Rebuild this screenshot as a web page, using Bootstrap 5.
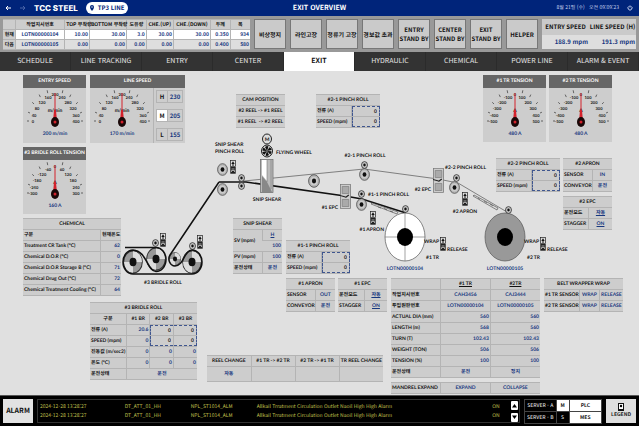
<!DOCTYPE html>
<html lang="ko">
<head>
<meta charset="utf-8">
<meta name="viewport" content="width=device-width, initial-scale=1">
<title>TCC STEEL – EXIT OVERVIEW</title>
<link rel="stylesheet" href="https://cdn.jsdelivr.net/npm/bootstrap@5.3.0/dist/css/bootstrap.min.css">
<style>
:root{--navy:#00247a;--ink:#111;--val:#17377f;--panel:#cdcdcd;--rule:#b4b4b4;--tight:Lato,"Noto Sans CJK KR",sans-serif}
body{font-family:"Noto Sans CJK KR","Noto Sans",sans-serif;font-size:5px;line-height:8px;color:var(--ink);background:#e0e0e0;min-height:100vh;text-rendering:geometricPrecision}
button,input{font:inherit;color:inherit;text-rendering:inherit}
button{padding:0}
.topbar{background:var(--navy);color:#fff;height:16px;font-size:7px}
.brand{font:800 8px/16px Inter,sans-serif}
.side{flex:1 1 0}
.line-pill{background:#fff;color:var(--navy);border-radius:6px;font-size:6px;font-weight:700;line-height:12px;padding:0 4px}
.clock{font-size:5px;color:#c9d3ee}
.strip{background:#999;height:36px;padding:3px;gap:4px}
.tb{width:100%;border-collapse:collapse;table-layout:fixed;background:var(--panel);font-family:var(--tight);font-weight:700}
.tb th,.tb td{border:1px solid var(--rule);border-left-width:0;border-right-width:0;height:11px;padding:0 1px;font-weight:700;white-space:nowrap}
.tb th+td,.tb td+td,.tb th+th,.tb td+th{border-left-width:1px}
.tb .v{color:var(--val)}
.orders{flex:247 1 0;font-family:"Noto Sans CJK KR",sans-serif}
.orders .tb{font-family:inherit}
.orders .tb th,.orders .tb td{height:10px;line-height:8px}
.orders tbody tr:first-child td{background:#fff}
.orders tbody tr:last-child td{background:#dedede}
.calls{flex:284 1 0;gap:4px}
.call{flex:1 1 0;background:#cacaca;border:1px solid #777;font-weight:700;font-size:6px;line-height:9px;color:#111;white-space:nowrap}
.speeds{flex:94 1 0;background:#cacaca}
.speeds div{font-size:6px;font-weight:700;line-height:16px;white-space:nowrap}
.speeds .v{background:#dedede;color:var(--val);line-height:14px;padding-right:1px}
.mainnav{background:#333}
.mainnav a{flex:1 1 0;color:#e6e6e6;text-decoration:none;text-align:center;font-size:7px;line-height:19px;white-space:nowrap;border-right:1px solid #2b2b2b}
.mainnav a.active{background:#fff;color:#111;font-weight:700}
.mimic{display:grid;flex:1 0 auto}
.mimic>*{grid-area:1/1}
.scene{width:100%;height:324px}
.scene text,.dial text{font-family:var(--tight);font-weight:700;fill:var(--ink)}
.scene text{font-size:5px}
.scene text.v,.dial text.v{fill:var(--val)}
.dial text{font-size:4px;text-anchor:middle}
.dial text.v,.dial text.unit{font-size:5px}
.zone-l{width:207px;padding:4px 0 0 23px}
.zone-m{width:184px}
.zone-r{width:248px}
.gauge{width:63px;background:var(--panel)}
.gauge h2{background:#666;color:#fff;font:700 5px/13px var(--tight);text-align:center;margin:0;white-space:nowrap}
.dial{display:block;width:63px;height:54px}
.wide{width:95px}
.hml{gap:6px;padding:2px 2px;border-left:1px solid var(--rule)}
.hml div{border:1px solid var(--rule);font-size:6px;font-weight:700;line-height:11px;text-align:center}
.hml span{flex:0 0 10px}
.hml output{flex:1;color:var(--val);border-left:1px solid var(--rule)}
.w49{width:49px}.w64{width:64px}.w79{width:79px}.w98{width:98px}.w107{width:107px}.w149{width:149px}.w176{width:176px}
.gap3{gap:3px}.gap4{gap:4px}.gap31{gap:31px}
.at-cam{padding:23px 0 0 29px}
.at-shear{padding:90px 0 0 26px}
.at-pinch{padding-top:22px}
.at-reel{padding-top:43px}
.at-roll{padding:6px 0 0 67px}
.at-tens{padding:4px 0 0 92px}
.at-apron{padding:16px 0 0 105px}
.at-tr{padding-top:48px}
.tb .box{padding:0}
.tb input{display:block;width:100%;height:10px;border:1px dashed #3f568f;border-bottom:0;background:transparent;text-align:right;padding:0 2px;border-radius:0;font-weight:700}
.tb tr:has(.box)+tr input{border-top:0;border-bottom:1px dashed #3f568f}
.tb .box:nth-last-child(2) input{border-right:0}
.tb .box+.box input{border-left:0}
.tb a{color:var(--val)}
.tb .tall td{height:15px}
.alarmbar{background:#000;border-top:1px solid #555;height:31px;padding:3px;gap:4px}
.alarm{width:30px;background:#e2e2e2;border:0;font-size:7px;font-weight:700;color:#111}
.log{flex:1 1 0;border:1px solid #333;padding:1px 1px 1px 2px;color:#c3c24e}
.log table{width:100%;table-layout:fixed}
.log td{padding:0;line-height:9px;white-space:nowrap}
.arrow{width:7px;height:9px;background:#fff;border:0;border-radius:1px;display:block}
.arrow svg{display:block;margin:auto;width:5px;height:5px}
.servers{width:78px;color:#ddd;border-collapse:collapse;text-align:center}
.servers th,.servers td{border:1px solid #444;padding:0;height:12px;font-weight:500;line-height:9px}
.servers .on{background:#fff;color:#111;font-weight:700}
.legend-btn{width:30px;background:#dedede;border:0;font-weight:700;color:#222}
</style>
<script src="https://cdn.jsdelivr.net/npm/bootstrap@5.3.0/dist/js/bootstrap.bundle.min.js"></script>
</head>
<body class="d-flex flex-column">
<header>
  <div class="topbar d-flex align-items-center px-1">
    <div class="side d-flex align-items-center">
      <svg width="26" height="8" viewBox="0 0 26 8" fill="none" stroke="#fff" aria-hidden="true"><path d="M7 4H2M4 2 2 4l2 2"/><path d="M16 4h5M19 2l2 2-2 2" stroke="#4a64a8"/></svg>
      <span class="brand ms-1 me-2">TCC STEEL</span>
      <span class="line-pill d-flex align-items-center"><svg class="me-1" width="4" height="6" viewBox="0 0 4 6" aria-hidden="true"><path d="M2 0a2 2 0 0 1 2 2Q4 4 2 6 0 4 0 2a2 2 0 0 1 2-2z" fill="#00247a"/><circle cx="2" cy="2" r=".7" fill="#fff"/></svg>TP3 LINE</span>
    </div>
    <strong>EXIT OVERVIEW</strong>
    <div class="side d-flex align-items-center justify-content-end clock"><span class="me-2">8월 21일 (수) &nbsp; 오전 09:09:23</span>
      <svg width="8" height="6" viewBox="0 0 8 6" fill="none" stroke="#c9d3ee" aria-hidden="true"><path d="M2 1.300a2 2 0 1 0 2 0M3 .5v2"/></svg></div>
  </div>
  <div class="strip d-flex">
    <div class="orders"><table class="tb text-end">
      <colgroup><col style="width:5%"><col style="width:20%"><col style="width:10%"><col style="width:15%"><col style="width:8%"><col style="width:11%"><col style="width:15%"><col style="width:8%"><col></colgroup>
      <thead class="text-center"><tr><th></th><th>작업지시번호</th><th>TOP 부착량</th><th>BOTTOM 부착량</th><th>도유량</th><th>CHE.(UP)</th><th>CHE.(DOWN)</th><th>두께</th><th>폭</th></tr></thead>
      <tbody><tr><th>현재</th><td class="v text-center">LOTN00000104</td><td class="v">10.00</td><td class="v">30.00</td><td class="v">3.0</td><td class="v">30.00</td><td class="v">30.00</td><td class="v">0.350</td><td class="v">934</td></tr>
      <tr><th>다음</th><td class="v text-center">LOTN00000105</td><td class="v">0.00</td><td class="v">0.00</td><td class="v">0.00</td><td class="v">0.00</td><td class="v">0.00</td><td class="v">0.400</td><td class="v">580</td></tr></tbody>
    </table></div>
    <div class="calls d-flex">
      <button class="call">비상정지</button><button class="call">라인고장</button><button class="call">정류기 고장</button><button class="call">경보값 초과</button><button class="call">ENTRY<br>STAND BY</button><button class="call">CENTER<br>STAND BY</button><button class="call">EXIT<br>STAND BY</button><button class="call">HELPER</button>
    </div>
    <div class="speeds row g-0 text-center">
      <div class="col-6">ENTRY SPEED</div><div class="col-6">LINE SPEED (H)</div>
      <div class="col-6 v text-end">188.9 mpm</div><div class="col-6 v text-end">191.3 mpm</div>
    </div>
  </div>
  <nav class="mainnav d-flex">
    <a href="#">SCHEDULE</a><a href="#">LINE TRACKING</a><a href="#">ENTRY</a><a href="#">CENTER</a><a href="#" class="active" aria-current="page">EXIT</a><a href="#">HYDRAULIC</a><a href="#">CHEMICAL</a><a href="#">POWER LINE</a><a href="#">ALARM &amp; EVENT</a>
  </nav>
</header>

<main class="mimic">
  <svg class="scene" viewBox="0 71 639 324" preserveAspectRatio="xMidYMin meet">
    <defs>
      <symbol id="roll" viewBox="0 0 20 20" preserveAspectRatio="none"><circle cx="10" cy="10" r="9.300" fill="#999" stroke="#333"/><path d="M10 10V1A9 9 0 0 1 19 10zM10 10V19A9 9 0 0 1 1 10z" fill="#ddd"/><circle cx="10" cy="10" r="3.500" fill="#111"/></symbol>
      <symbol id="disc" viewBox="0 0 20 20" preserveAspectRatio="none"><circle cx="10" cy="10" r="9" fill="#b5b5b5" stroke="#444" stroke-width="1.200"/><circle cx="10" cy="10" r="6" fill="#ccc"/><circle cx="10" cy="10" r="3.500" fill="#111"/></symbol>
      <symbol id="mini" viewBox="0 0 20 20" preserveAspectRatio="none"><circle cx="10" cy="10" r="8.500" fill="#ccc" stroke="#222" stroke-width="2"/><circle cx="10" cy="10" r="3.500" fill="#111"/></symbol>
      <symbol id="clamp" viewBox="0 0 6 14"><rect x=".5" y=".5" width="5" height="6" fill="#ddd" stroke="#222" stroke-width=".7"/><path d="M3 1.200 4.700 4H1.300zM2.500 4h1v2h-1z" fill="#111"/><rect x=".3" y="7" width="5.400" height="6.700" fill="#222"/><path d="M1.500 9h3M1.500 12V10.500h3V12" stroke="#ddd" stroke-width=".7" fill="none"/></symbol>
      <symbol id="epc" viewBox="0 0 10 25" preserveAspectRatio="none"><rect x=".4" y=".4" width="9.200" height="24.200" fill="#ccc" stroke="#777" stroke-width=".7"/><path d="M2 2.500h6v7H2zM2 15.500h6v7H2z" fill="#aaa" stroke="#777" stroke-width=".6"/><path d="M0 11.500l5 1.500M8 11l-3 2.500" stroke="#222"/></symbol>
    </defs>
    <path d="M244 181 364 169 438 179 458 183 507 212" fill="none" stroke="#555" stroke-width=".7"/>
    <use href="#roll" x="123" y="250" width="20" height="24"/>
    <use href="#roll" x="146" y="247" width="20" height="24"/>
    <use href="#roll" x="169" y="252" width="12" height="14"/>
    <use href="#roll" x="182" y="250" width="20" height="24"/>
    <use href="#mini" x="152" y="239" width="7" height="8"/>
    <use href="#mini" x="189" y="242" width="7" height="8"/>
    <path d="M125 247.500H156A10 12 0 0 1 156 271.500C147 271 147 251 133 250A10 12 0 0 0 133 274H192A10 12 0 0 0 192 250C184 250 184 266 175 266A6 7 0 0 1 170 255L219 182" fill="none" stroke="#111" stroke-width="1.500"/>
    <use href="#clamp" x="160" y="233" width="6" height="14"/><use href="#clamp" x="197" y="235" width="6" height="14"/>
    <text x="163" y="284" text-anchor="middle">#3 BRIDLE ROLL</text>
    <text x="215" y="146">SNIP SHEAR</text><text x="215" y="153">PINCH ROLL</text>
    <use href="#disc" x="217" y="163" width="11" height="13"/><use href="#disc" x="217" y="183" width="11" height="13"/>
    <use href="#clamp" x="230" y="160" width="6" height="14"/>
    <path d="M219 182H246L345 196 362 199 406 213" fill="none" stroke="#111" stroke-width="1.500"/>
    <use href="#mini" x="238" y="174" width="7" height="8"/><use href="#mini" x="238" y="182" width="7" height="8"/>
    <ellipse cx="267" cy="139" rx="4.500" ry="5" fill="#ddd" stroke="#222"/><text x="267" y="141" text-anchor="middle">M</text>
    <ellipse cx="267" cy="151" rx="5.500" ry="6" fill="#ddd" stroke="#222"/>
    <g fill="#111"><path id="blade" d="M267 151l-2-4q2-1.500 3.500-.5z"/><use href="#blade" transform="rotate(60 267 151)"/><use href="#blade" transform="rotate(120 267 151)"/><use href="#blade" transform="rotate(180 267 151)"/><use href="#blade" transform="rotate(240 267 151)"/><use href="#blade" transform="rotate(300 267 151)"/></g>
    <text x="276" y="154">FLYING WHEEL</text>
    <rect x="260.500" y="159.500" width="12.500" height="33" fill="#bbb" stroke="#666" stroke-width=".7"/>
    <path d="M262 160h5v21l-5-6z" fill="#fff"/><path d="M262 176l5 6 5 10h-10z" fill="#888"/><path d="M267 160v22M271 160v29" stroke="#777" stroke-width=".6"/>
    <text x="267" y="201" text-anchor="middle">SNIP SHEAR</text>
    <use href="#disc" x="308" y="174" width="12" height="14"/>
    <text x="365" y="157" text-anchor="middle">#2-1 PINCH ROLL</text>
    <use href="#mini" x="361" y="161" width="7" height="8"/><use href="#disc" x="359" y="168" width="11" height="13"/>
    <use href="#epc" x="340" y="184" width="11" height="25"/><text x="338" y="209" text-anchor="end">#1 EPC</text>
    <use href="#mini" x="358" y="190" width="7" height="8"/><use href="#disc" x="356" y="198" width="11" height="13"/>
    <text x="368" y="196">#1-1 PINCH ROLL</text>
    <g fill="#ddd" stroke="#444" stroke-width=".6"><path d="M371 204l1-1 26 9-1 2zM378 207l3 1M384 208l3 2M390 211l3 1M473 196l1-1 24 13-1 2zM478 198l2 1.500M484 201l3 2M490 204l3 2"/></g>
    <use href="#clamp" x="370" y="211" width="6" height="14"/><text x="384" y="231" text-anchor="end">#1 APRON</text>
    <ellipse cx="405" cy="237" rx="20" ry="24" fill="#fff" stroke="#555" stroke-width=".7"/><path d="M385 237h40M405 213v48" stroke="#666" stroke-width=".6"/><ellipse cx="405" cy="237" rx="8" ry="9"/>
    <ellipse cx="505" cy="237" rx="20" ry="24" fill="#999" stroke="#555" stroke-width=".7"/><ellipse cx="505" cy="237" rx="8" ry="9"/>
    <use href="#mini" x="402" y="205" width="7" height="8"/><use href="#mini" x="505" y="206" width="7" height="8"/>
    <text x="439" y="243" text-anchor="end">WRAP</text><use href="#clamp" x="440" y="237" width="6" height="14"/><text x="447" y="251">RELEASE</text><text x="426" y="259">#1 TR</text>
    <text x="539" y="243" text-anchor="end">WRAP</text><use href="#clamp" x="540" y="237" width="6" height="14"/><text x="547" y="251">RELEASE</text><text x="527" y="259">#2 TR</text>
    <text x="405" y="270" text-anchor="middle" class="v">LOTN00000104</text><text x="505" y="270" text-anchor="middle" class="v">LOTN00000105</text>
    <text x="445" y="169">#2-2 PINCH ROLL</text>
    <use href="#epc" x="433" y="168" width="11" height="25"/><text x="431" y="191" text-anchor="end">#2 EPC</text>
    <use href="#mini" x="453" y="174" width="7" height="8"/><use href="#disc" x="449" y="181" width="11" height="13"/>
    <use href="#clamp" x="462" y="192" width="6" height="14"/><text x="465" y="213" text-anchor="middle">#2 APRON</text>
  </svg>

  <div class="d-flex justify-content-center align-items-start">
    <section class="zone-l flex-shrink-0">
      <div class="d-flex gap4">
        <div class="gauge"><h2>ENTRY SPEED</h2><svg class="dial" data-kind="speed" data-value="200 m/min" viewBox="0 0 63 54"></svg></div>
        <div class="wide gauge"><h2>LINE SPEED</h2><div class="d-flex"><svg class="dial" data-kind="speed" data-value="170 m/min" viewBox="0 0 63 54"></svg>
          <div class="hml flex-fill d-flex flex-column"><div class="d-flex"><span>H</span><output>230</output></div><div class="d-flex"><span class="bg-white">M</span><output>205</output></div><div class="d-flex"><span>L</span><output>155</output></div></div></div></div>
      </div>
      <div class="gauge mt-1"><h2>#3 BRIDLE ROLL TENSION</h2><svg class="dial" data-kind="60" data-value="160 A" viewBox="0 0 63 54"></svg></div>
      <div class="w98 mt-1"><table class="tb">
        <colgroup><col style="width:79%"><col></colgroup>
        <tr><th colspan="2" class="text-center">CHEMICAL</th></tr>
        <tr><th>구분</th><th class="text-end">현재온도</th></tr>
        <tr><th>Treatment CR Tank (°C)</th><td class="v text-end">62</td></tr>
        <tr><th>Chemical D.O.R (°C)</th><td class="v text-end">0</td></tr>
        <tr><th>Chemical D.O.R Storage B (°C)</th><td class="v text-end">71</td></tr>
        <tr><th>Chemical Drug Out (°C)</th><td class="v text-end">72</td></tr>
        <tr><th>Chemical Treatment Cooling (°C)</th><td class="v text-end">64</td></tr>
      </table></div>
      <div class="at-roll"><table class="tb w107">
        <colgroup><col style="width:34%"><col><col><col></colgroup>
        <tr class="text-center"><th colspan="4">#3 BRIDLE ROLL</th></tr>
        <tr class="text-center"><th>구분</th><th>#1 BR</th><th>#2 BR</th><th>#3 BR</th></tr>
        <tr><th>전류 (A)</th><td class="v text-end">20.6</td><td class="box"><input aria-label="#2 BR 전류" value="0"></td><td class="box"><input aria-label="#3 BR 전류" value="0"></td></tr>
        <tr><th>SPEED (mpm)</th><td class="v text-end">0</td><td class="box"><input aria-label="#2 BR SPEED" value="0"></td><td class="box"><input aria-label="#3 BR SPEED" value="0"></td></tr>
        <tr><th>진동값 (m/sec2)</th><td class="v text-end">0</td><td class="v text-end">0</td><td class="v text-end">0</td></tr>
        <tr><th>온도 (°C)</th><td class="v text-end">0</td><td class="v text-end">0</td><td class="v text-end">0</td></tr>
        <tr><th>운전상태</th><td class="v text-center" colspan="3">운전</td></tr>
      </table></div>
    </section>

    <section class="zone-m flex-shrink-0">
      <div class="at-cam d-flex gap31">
        <div class="w49"><table class="tb text-center"><tr><th>CAM POSITION</th></tr><tr><td>#2 REEL -&gt; #1 REEL</td></tr><tr><td>#1 REEL &nbsp;-&gt; #2 REEL</td></tr></table></div>
        <div class="w64"><table class="tb"><colgroup><col style="width:56%"><col></colgroup><tr><th colspan="2" class="text-center">#2-1 PINCH ROLL</th></tr><tr><th>전류 (A)</th><td class="box"><input aria-label="#2-1 전류" value="0"></td></tr><tr><th>SPEED (mpm)</th><td class="box"><input aria-label="#2-1 SPEED" value="0"></td></tr></table></div>
      </div>
      <div class="at-shear d-flex gap4 align-items-start">
        <div class="w49"><table class="tb"><colgroup><col style="width:60%"><col></colgroup><tr><th colspan="2" class="text-center">SNIP SHEAR</th></tr><tr><th rowspan="2">SV (mpm)</th><td class="text-center"><a href="#">H</a></td></tr><tr><td class="v text-end">100</td></tr><tr><th>PV (mpm)</th><td class="v text-end">100</td></tr><tr><th>운전상태</th><td class="v text-center">운전</td></tr></table></div>
        <div class="at-pinch">
          <div class="w64 mb-1"><table class="tb"><colgroup><col style="width:56%"><col></colgroup><tr><th colspan="2" class="text-center">#1-1 PINCH ROLL</th></tr><tr><th>전류 (A)</th><td class="box"><input aria-label="#1-1 전류" value="0"></td></tr><tr><th>SPEED (mpm)</th><td class="box"><input aria-label="#1-1 SPEED" value="0"></td></tr></table></div>
          <div class="d-flex gap3">
            <div class="w49"><table class="tb"><colgroup><col style="width:60%"><col></colgroup><tr><th colspan="2" class="text-center">#1 APRON</th></tr><tr><th>SENSOR</th><td class="v text-center">OUT</td></tr><tr><th>CONVEYOR</th><td class="v text-center">운전</td></tr></table></div>
            <div class="w49"><table class="tb"><colgroup><col style="width:54%"><col></colgroup><tr><th colspan="2" class="text-center">#1 EPC</th></tr><tr><th>운전모드</th><td class="text-center"><a href="#">자동</a></td></tr><tr><th>STAGGER</th><td class="text-center"><a href="#">ON</a></td></tr></table></div>
          </div>
        </div>
      </div>
      <div class="at-reel"><table class="tb w176 text-center"><tr><th>REEL CHANGE</th><th>#1 TR -&gt; #2 TR</th><th>#2 TR -&gt; #1 TR</th><th>TR REEL CHANGE</th></tr><tr class="tall"><td class="v">자동</td><td></td><td></td><td></td></tr></table></div>
    </section>

    <section class="zone-r flex-shrink-0">
      <div class="at-tens d-flex gap3">
        <div class="gauge"><h2>#1 TR TENSION</h2><svg class="dial" data-kind="100" data-value="480 A" viewBox="0 0 63 54"></svg></div>
        <div class="gauge"><h2>#2 TR TENSION</h2><svg class="dial" data-kind="100" data-value="480 A" viewBox="0 0 63 54"></svg></div>
      </div>
      <div class="at-apron d-flex gap3 align-items-start">
        <div class="w64"><table class="tb"><colgroup><col style="width:56%"><col></colgroup><tr><th colspan="2" class="text-center">#2-2 PINCH ROLL</th></tr><tr><th>전류 (A)</th><td class="box"><input aria-label="#2-2 전류" value="0"></td></tr><tr><th>SPEED (mpm)</th><td class="box"><input aria-label="#2-2 SPEED" value="0"></td></tr></table></div>
        <div class="d-flex flex-column gap4">
          <div class="w49"><table class="tb"><colgroup><col style="width:60%"><col></colgroup><tr><th colspan="2" class="text-center">#2 APRON</th></tr><tr><th>SENSOR</th><td class="v text-center">IN</td></tr><tr><th>CONVEYOR</th><td class="v text-center">운전</td></tr></table></div>
          <div class="w49"><table class="tb"><colgroup><col style="width:52%"><col></colgroup><tr><th colspan="2" class="text-center">#2 EPC</th></tr><tr><th>운전모드</th><td class="text-center"><a href="#">자동</a></td></tr><tr><th>STAGGER</th><td class="text-center"><a href="#">ON</a></td></tr></table></div>
        </div>
      </div>
      <div class="at-tr d-flex gap4 align-items-start">
        <div class="w149 d-flex flex-column gap4">
          <table class="tb">
            <tr class="text-center text-decoration-underline"><th></th><th>#1 TR</th><th>#2TR</th></tr>
            <tr><th>작업지시번호</th><td class="v text-center">CAH3456</td><td class="v text-center">CAJ3444</td></tr>
            <tr><th>투입원판번호</th><td class="v text-center">LOTN00000104</td><td class="v text-center">LOTN00000105</td></tr>
            <tr><th>ACTUAL DIA (mm)</th><td class="v text-end">560</td><td class="v text-end">560</td></tr>
            <tr><th>LENGTH (m)</th><td class="v text-end">568</td><td class="v text-end">560</td></tr>
            <tr><th>TURN (T)</th><td class="v text-end">102.43</td><td class="v text-end">102.43</td></tr>
            <tr><th>WEIGHT (TON)</th><td class="v text-end">506</td><td class="v text-end">506</td></tr>
            <tr><th>TENSION (%)</th><td class="v text-end">100</td><td class="v text-end">100</td></tr>
            <tr><th>운전상태</th><td class="v text-center">운전</td><td class="v text-center">정지</td></tr>
          </table>
          <table class="tb"><tr><th>MANDREL EXPAND</th><td class="v text-center">EXPAND</td><td class="v text-center">COLLAPSE</td></tr></table>
        </div>
        <div class="w79"><table class="tb text-center"><colgroup><col style="width:45%"><col style="width:25%"><col></colgroup><tr><th colspan="3">BELT WRAPPER WRAP</th></tr><tr><th>#1 TR SENSOR</th><td class="v">WRAP</td><td class="v">RELEASE</td></tr><tr><th>#2 TR SENSOR</th><td class="v">WRAP</td><td class="v">RELEASE</td></tr></table></div>
      </div>
    </section>
  </div>
</main>

<footer class="alarmbar d-flex">
  <button class="alarm">ALARM</button>
  <div class="log d-flex align-items-center">
    <table><colgroup><col style="width:18%"><col style="width:14%"><col style="width:14%"><col><col style="width:4%"></colgroup>
      <tr><td>2024-12-28 13:28:27</td><td>DT_ATT_01_HH</td><td>NPL_ST1014_ALM</td><td>Allkail Trratment Circulation Outlet Naoil High High Alarm</td><td>ON</td></tr>
      <tr><td>2024-12-28 13:28:27</td><td>DT_ATT_01_HH</td><td>NPL_ST1014_ALM</td><td>Allkail Trratment Circulation Outlet Naoil High High Alarm</td><td>ON</td></tr>
    </table>
    <div class="d-flex flex-column gap3"><button class="arrow" aria-label="Up"><svg viewBox="0 0 5 5"><path d="M2.500 1 5 4.500H0z"/></svg></button><button class="arrow" aria-label="Down"><svg viewBox="0 0 5 5"><path d="M0 .5h5L2.500 4z"/></svg></button></div>
  </div>
  <table class="servers"><colgroup><col style="width:41%"><col style="width:17%"><col></colgroup><tr><th>SERVER - A</th><td class="on">M</td><td class="on">PLC</td></tr><tr><th>SERVER - B</th><td>S</td><td class="on">MES</td></tr></table>
  <button class="legend-btn"><svg class="d-block mx-auto" width="6" height="8" viewBox="0 0 6 8" aria-hidden="true"><rect x=".5" y=".5" width="5" height="7" fill="#fff" stroke="#111"/><circle cx="3" cy="3" r="1.200"/><path d="M1 6.500h4" stroke="#111"/></svg>LEGEND</button>
</footer>
<script>
const spots=[[10,34],[11,28],[14,21],[19,15],[25,10],[32,7],[39,10],[45,15],[50,21],[53,28],[53,34]];
document.querySelectorAll('.dial').forEach(d=>{
  const speed=d.dataset.kind==='speed', step=speed?40:+d.dataset.kind;
  let s='';
  spots.forEach(([x,y],i)=>{
    const n=speed?i*step:(i-5)*step, a=Math.atan2(y-34,x-32), c=Math.cos(a), k=Math.sin(a);
    if(i!==5) s+=`<path d="M${32+c*26} ${33+k*29}L${32+c*28} ${33+k*32}" stroke="#333" stroke-width=".7"/>`;
    s+=`<text x="${x}" y="${y+1}">${n}</text>`;
  });
  s+=`<text class="unit" x="32" y="24">${speed?'m/min':'A'}</text><path d="M32 5V34" stroke="#d3222c" stroke-width="1"/><path d="M31 22h2l1 12h-4z" fill="#d3222c"/><ellipse cx="32" cy="34" rx="4" ry="5" fill="#1a0808"/><circle cx="32" cy="34" r="1.500" fill="#d3222c"/><text class="v" x="32" y="47">${d.dataset.value}</text>`;
  d.innerHTML=s;
});
</script>
</body>
</html>
